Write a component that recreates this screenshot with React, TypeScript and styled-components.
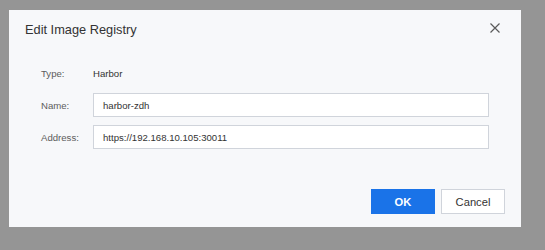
import React, { useState } from "react";
import styled, { createGlobalStyle } from "styled-components";

const GlobalStyle = createGlobalStyle`
  html, body {
    margin: 0;
    padding: 0;
    height: 100%;
    background: #959595;
    font-family: "Liberation Sans", Arial, sans-serif;
  }
  #root {
    height: 100%;
  }
`;

const Overlay = styled.div`
  height: 100vh;
  width: 100vw;
  padding: 10px 0 0 9px;
  box-sizing: border-box;
`;

const Dialog = styled.div`
  width: 512px;
  background: #f7f8fa;
  display: flex;
  flex-direction: column;
`;

const Header = styled.div`
  height: 38px;
  display: flex;
  align-items: center;
  justify-content: space-between;
  padding: 0 21px 0 16px;
`;

const Title = styled.h2`
  margin: 0;
  font-size: 12.8px;
  font-weight: normal;
  color: #333;
`;

const CloseButton = styled.button`
  width: 10px;
  height: 10px;
  padding: 0;
  margin-bottom: 3px;
  border: none;
  background: transparent;
  cursor: pointer;
  display: flex;
`;

const Body = styled.div`
  padding: 13px 32px 40px;
  display: flex;
  flex-direction: column;
  gap: 8px;
`;

const Row = styled.div`
  height: 24px;
  display: flex;
  align-items: center;
`;

const Label = styled.span`
  width: 52px;
  flex-shrink: 0;
  font-size: 9.6px;
  color: #5c5c5c;
`;

const Value = styled.span`
  font-size: 9.6px;
  color: #333;
`;

const Input = styled.input`
  flex: 1;
  height: 24px;
  box-sizing: border-box;
  border: 1px solid #d0d4db;
  background: #fff;
  padding: 0 9px;
  font-family: inherit;
  font-size: 9.6px;
  color: #333;
  outline: none;
`;

const Footer = styled.div`
  display: flex;
  justify-content: flex-end;
  gap: 6px;
  padding: 0 16px 13px;
`;

const Button = styled.button<{ primary?: boolean }>`
  width: 64px;
  height: 25px;
  box-sizing: border-box;
  font-family: inherit;
  font-size: 11.2px;
  font-weight: ${({ primary }) => (primary ? "bold" : "normal")};
  color: ${({ primary }) => (primary ? "#fff" : "#333")};
  background: ${({ primary }) => (primary ? "#1a73e8" : "#fff")};
  border: 1px solid ${({ primary }) => (primary ? "#1a73e8" : "#d0d4db")};
  cursor: pointer;
`;

const App = () => {
  const [name, setName] = useState("harbor-zdh");
  const [address, setAddress] = useState("https://192.168.10.105:30011");

  return (
    <>
      <GlobalStyle />
      <Overlay>
        <Dialog>
          <Header>
            <Title>Edit Image Registry</Title>
            <CloseButton aria-label="Close">
              <svg width="10" height="10" viewBox="0 0 10 10">
                <path d="M0.5 0.5L9.5 9.5M9.5 0.5L0.5 9.5" stroke="#5a5a5a" strokeWidth="1.2" />
              </svg>
            </CloseButton>
          </Header>
          <Body>
            <Row>
              <Label>Type:</Label>
              <Value>Harbor</Value>
            </Row>
            <Row>
              <Label>Name:</Label>
              <Input value={name} onChange={(e) => setName(e.target.value)} />
            </Row>
            <Row>
              <Label>Address:</Label>
              <Input value={address} onChange={(e) => setAddress(e.target.value)} />
            </Row>
          </Body>
          <Footer>
            <Button primary>OK</Button>
            <Button>Cancel</Button>
          </Footer>
        </Dialog>
      </Overlay>
    </>
  );
};

export default App;
